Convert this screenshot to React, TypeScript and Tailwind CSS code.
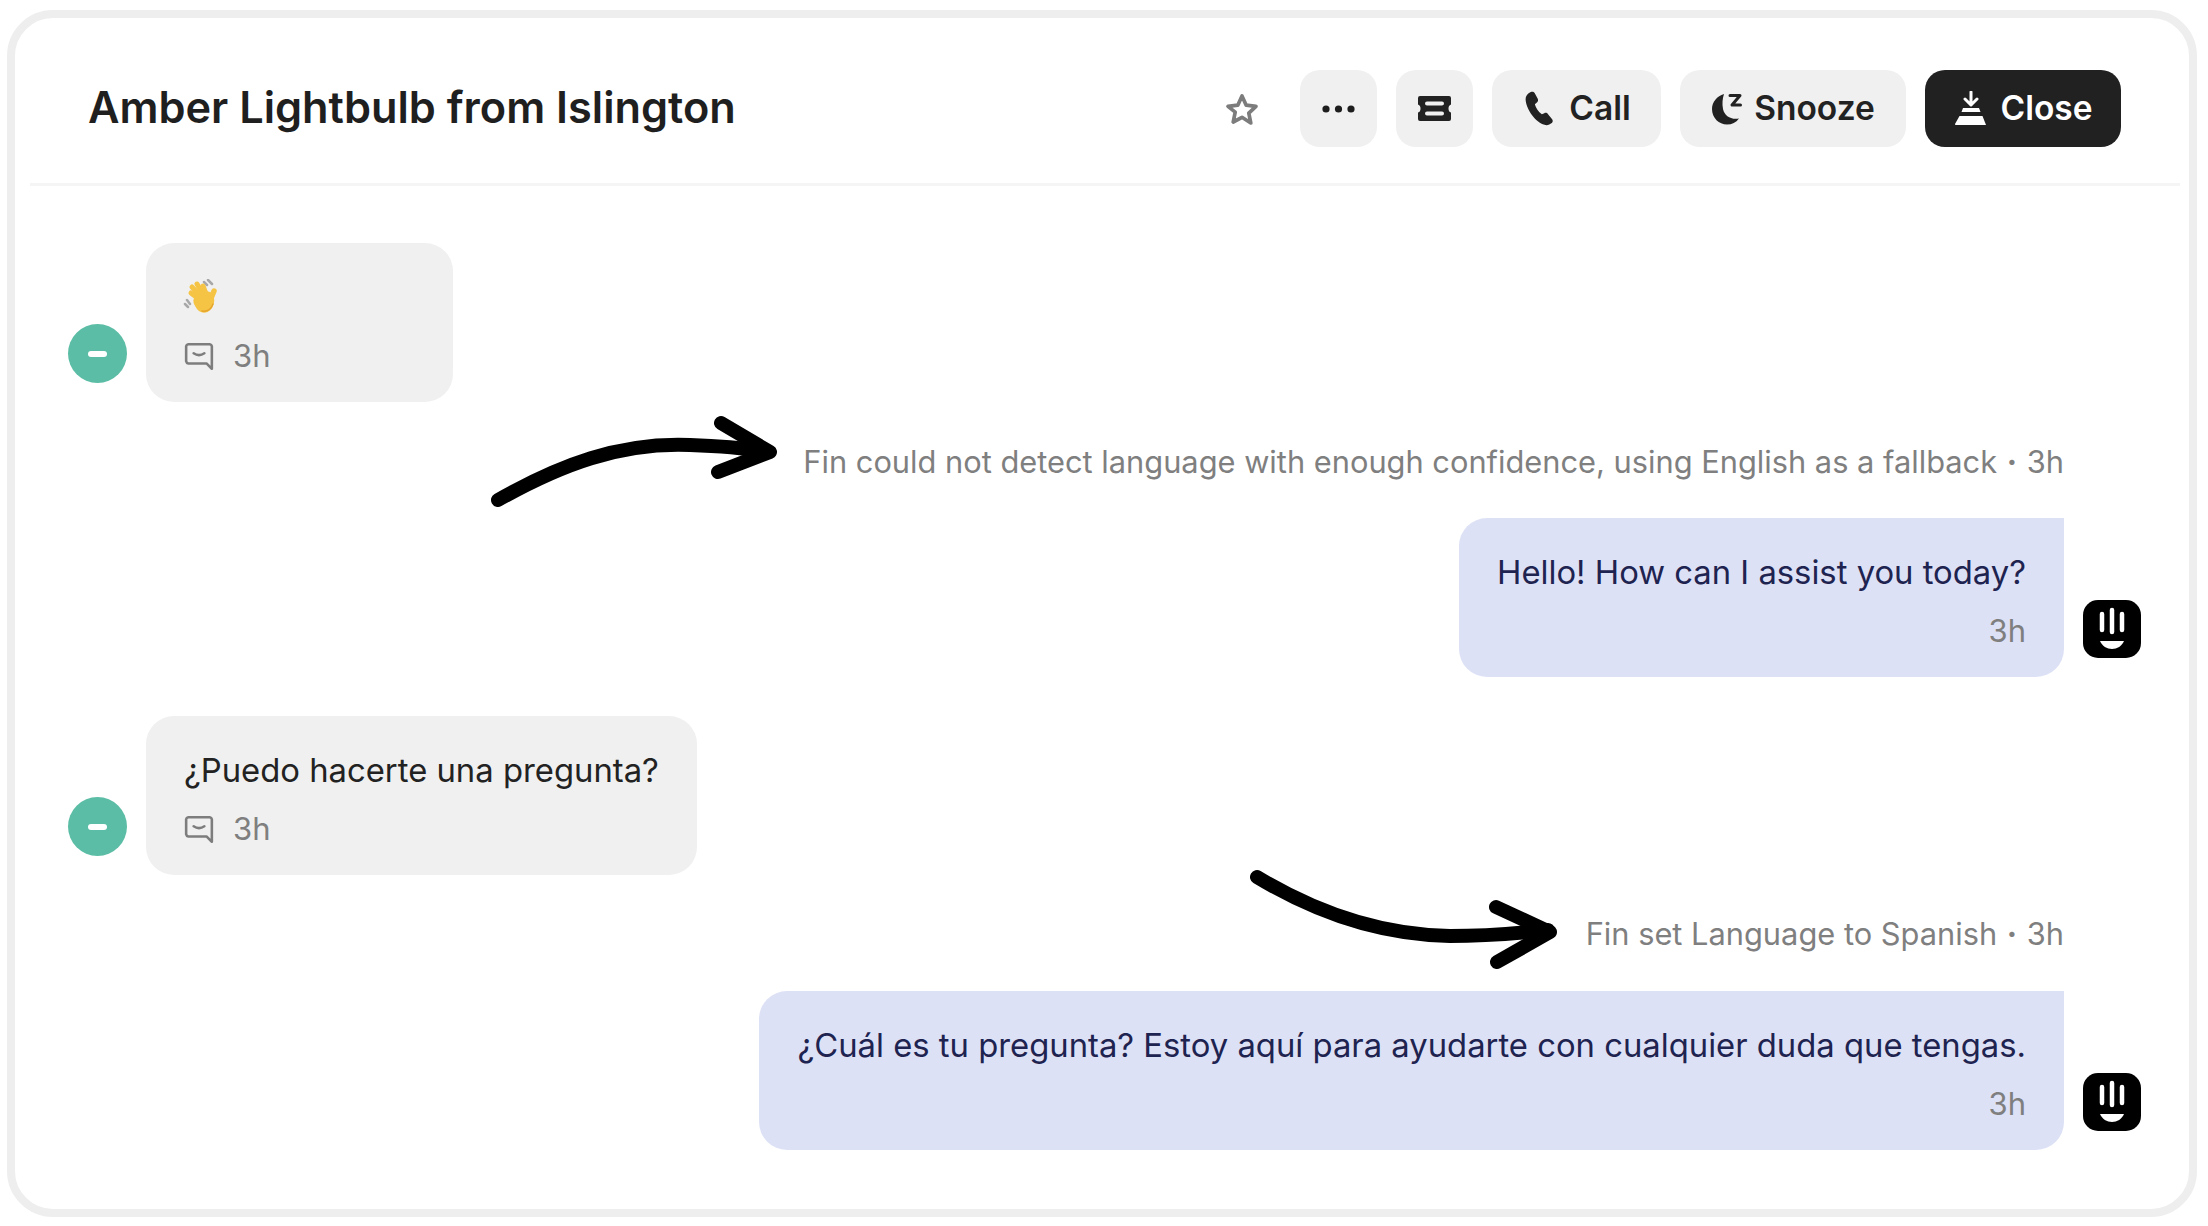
import React from "react";

function CommentIcon() {
  return (
    <svg width="30" height="29" viewBox="0 0 28 27" fill="none" stroke="#7d7d7d" strokeWidth="2.4" strokeLinejoin="round" strokeLinecap="round">
      <path d="M4 2h20a2.500 2.500 0 0 1 2 2v21l-5-5H4a2.500 2.500 0 0 1-2-2V4a2.500 2.500 0 0 1 2-2z" />
      <path d="M9 10.500c3 2 7 2 10 0" />
    </svg>
  );
}

function Hand() {
  return (
    <svg width="36" height="36" viewBox="0 0 36 36" fill="none" strokeLinecap="round">
      <path d="M2 25l3 3M4 21l3 4M21 3l3 3M25 1l4 4" stroke="#a8a8a8" strokeWidth="2.500" />
      <g stroke="#f6c445">
        <path d="M21 24L8 14" strokeWidth="5" />
        <path d="M22 22L9 8" strokeWidth="5" />
        <path d="M23 21L14 5" strokeWidth="5" />
        <path d="M25 20L20 7" strokeWidth="5" />
        <path d="M26 24L31 12" strokeWidth="5.500" />
      </g>
      <path d="M12 18c2-4 10-7 15-5 5 3 5 10 3 14-2 5-7 8-12 6-3-1-5-4-7-8-1-3-1-5 1-7z" fill="#f6c445" />
      <path d="M19 32c5 1 9-2 11-7" stroke="#e6a62f" strokeWidth="1.500" />
    </svg>
  );
}

function Bot() {
  return (
    <div className="w-[58px] h-[58px] rounded-[15px] bg-black mb-[19px] flex items-center justify-center shrink-0">
      <svg width="58" height="58" viewBox="0 0 58 58" fill="none" stroke="white" strokeLinecap="round">
        <path d="M19 14v16M29 10v22M39 14v16" strokeWidth="4.500" />
        <path d="M17 41h24c-2 5-7 8-12 8s-10-3-12-8z" fill="white" strokeWidth="0" />
      </svg>
    </div>
  );
}

function Presence() {
  return (
    <div className="w-[59px] h-[59px] rounded-full bg-[#5bbda5] mb-[19px] flex items-center justify-center shrink-0">
      <div className="w-[19px] h-[6px] rounded-full bg-white" />
    </div>
  );
}

function Time() {
  return (
    <div className="flex items-center gap-[19px] h-[38px]">
      <CommentIcon />
      <span className="text-[31px] leading-[38px] text-[#7f7f7f]">3h</span>
    </div>
  );
}

function UserMsg({ children, top }: { children: React.ReactNode; top: string }) {
  return (
    <div className={`flex items-end gap-[19px] pl-[53px] ${top}`}>
      <Presence />
      <div className="bg-[#f0f0f0] rounded-[28px] px-[38px] pt-[34px] h-[159px] min-w-[307px] flex flex-col justify-start gap-[20px]">
        {children}
      </div>
    </div>
  );
}

function BotMsg({ text, top }: { text: string; top: string }) {
  return (
    <div className={`flex items-end justify-end gap-[19px] pr-[48px] ${top}`}>
      <div className="bg-[#dde1f6] rounded-[28px] rounded-tr-none px-[38px] pt-[34px] h-[159px] flex flex-col items-end gap-[20px]">
        <span className="text-[32.8px] leading-[40px] text-[#1e2350] whitespace-nowrap">{text}</span>
        <span className="text-[31px] leading-[38px] text-[#7f7f7f]">3h</span>
      </div>
      <Bot />
    </div>
  );
}

function Status({ text, top }: { text: string; top: string }) {
  return (
    <div className={`flex justify-end pr-[125px] h-[40px] items-center ${top}`}>
      <span className="text-[30.8px] leading-[40px] text-[#7f7f7f] whitespace-nowrap">
        {text} <span className="font-bold mx-[1px]">·</span> 3h
      </span>
    </div>
  );
}

function IconBtn({ children }: { children: React.ReactNode }) {
  return <div className="w-[77px] h-[77px] rounded-[20px] bg-[#f0f0f0] flex items-center justify-center">{children}</div>;
}

function TextBtn({ icon, label, w, dark }: { icon: React.ReactNode; label: string; w: string; dark?: boolean }) {
  return (
    <div
      className={`${w} h-[77px] rounded-[20px] flex items-center justify-center gap-[11px] text-[33.5px] font-semibold ${
        dark ? "bg-[#212121] text-white" : "bg-[#f0f0f0] text-[#222222]"
      }`}
    >
      {icon}
      <span>{label}</span>
    </div>
  );
}

export default function App() {
  return (
    <div className="w-[2208px] h-[1226px] bg-white pt-[10px] pl-[7px] font-['Inter',sans-serif]">
      <div className="relative w-[2190px] h-[1207px] border-8 border-[#eeeeee] rounded-[46px] bg-white">
        <header className="ml-[15px] mr-[9px] h-[168px] border-b-[3px] border-[#f5f5f5] flex items-center pl-[59px] pr-[59px] pt-[16px]">
          <h1 className="text-[43.3px] font-semibold text-[#1f1f1f] whitespace-nowrap flex-1 -ml-[1px] -mt-[3px]">Amber Lightbulb from Islington</h1>
          <div className="flex items-center gap-[19px]">
            <svg width="36" height="34" viewBox="0 0 36 34" fill="none" stroke="#7c7c7c" strokeWidth="3.700" strokeLinejoin="round" className="mr-[21px]">
              <path d="M18 4l4.200 9.200 9.800 1.200-7.200 6.700 2 9.900L18 25.300 9.200 30l2-9.900L4 14.400l9.800-1.200z" />
            </svg>
            <IconBtn>
              <svg width="33" height="8" viewBox="0 0 33 8" fill="#1d1d1d">
                <circle cx="4" cy="4" r="3.600" />
                <circle cx="16.500" cy="4" r="3.600" />
                <circle cx="29" cy="4" r="3.600" />
              </svg>
            </IconBtn>
            <IconBtn>
              <svg width="35" height="25" viewBox="0 0 35 25">
                <path
                  fillRule="evenodd"
                  fill="#222222"
                  d="M3 0h29a2 2 0 0 1 2 2v6.500c-2 .5-2.500 2.500-2.500 4s.5 3.500 2.500 4V23a2 2 0 0 1-2 2H3a2 2 0 0 1-2-2v-6.500c2-.5 2.500-2.500 2.500-4s-.5-3.500-2.500-4V2a2 2 0 0 1 2-2zM10 5.500a1.200 1.200 0 0 0 0 4h15a1.200 1.200 0 0 0 0-4zM10 15.500a1.200 1.200 0 0 0 0 4h15a1.200 1.200 0 0 0 0-4z"
                />
              </svg>
            </IconBtn>
            <TextBtn
              w="w-[169px]"
              label="Call"
              icon={
                <svg width="36" height="35" viewBox="0 0 34 34" fill="#222222">
                  <path d="M8 1c1.500-.8 3-.3 3.800 1l3 5.500c.7 1.300.3 2.800-.8 3.700l-2 1.600c.9 3.500 3.500 7.500 6.800 9.700l2.400-1c1.300-.6 2.800-.2 3.600 1l4 5c.9 1.200.7 2.800-.4 3.700-2 1.700-4.500 2.500-7 1.700C13 30.500 3.500 18 3 8c-.1-3 2-5.600 5-7z" />
                </svg>
              }
            />
            <TextBtn
              w="w-[226px]"
              label="Snooze"
              icon={
                <svg width="32" height="33" viewBox="0 0 32 33" fill="#222222">
                  <path d="M13 2C6 4 1 10 1 17c0 9 7 15.500 15 15.500 5 0 9-2 12-6-8 1.500-14.500-2.500-16-9.500-1-5.500-.5-10.500 1-15z" />
                  <path d="M19 3.500h10L21 13h8.500" fill="none" stroke="#222222" strokeWidth="3" strokeLinejoin="round" strokeLinecap="round" />
                </svg>
              }
            />
            <TextBtn
              w="w-[196px]"
              label="Close"
              dark
              icon={
                <svg width="36" height="35" viewBox="0 0 36 35" fill="white">
                  <path d="M18 1v11M12 8l6 6 6-6" stroke="white" strokeWidth="3" fill="none" strokeLinecap="round" strokeLinejoin="round" />
                  <path d="M10 17h16l1.500 4h-19z" />
                  <path d="M6.500 25h23l3.500 9H2.500a1 1 0 0 1-.5-1z" />
                </svg>
              }
            />
          </div>
        </header>

        <UserMsg top="mt-[57px]">
          <div className="h-[40px] flex items-center -ml-[1px]">
            <Hand />
          </div>
          <Time />
        </UserMsg>

        <Status top="mt-[40px]" text="Fin could not detect language with enough confidence, using English as a fallback" />
        <BotMsg top="mt-[36px]" text="Hello! How can I assist you today?" />

        <UserMsg top="mt-[39px]">
          <span className="text-[32.8px] leading-[40px] text-[#222222] whitespace-nowrap">¿Puedo hacerte una pregunta?</span>
          <Time />
        </UserMsg>

        <Status top="mt-[39px]" text="Fin set Language to Spanish" />
        <BotMsg top="mt-[37px]" text="¿Cuál es tu pregunta? Estoy aquí para ayudarte con cualquier duda que tengas." />

        <svg className="absolute left-[455px] top-[392px]" width="320" height="100" viewBox="470 410 320 100" fill="none" stroke="black" strokeWidth="14" strokeLinecap="round" strokeLinejoin="round">
          <path d="M498 500C560 465 620 442 690 445C720 446 745 448 768 452" />
          <path d="M721 423L770 452L718 472" />
        </svg>
        <svg className="absolute left-[1215px] top-[842px]" width="340" height="110" viewBox="1230 860 340 110" fill="none" stroke="black" strokeWidth="14" strokeLinecap="round" strokeLinejoin="round">
          <path d="M1257 877C1320 915 1385 935 1450 936C1485 936 1520 933 1548 930" />
          <path d="M1496 907L1550 932L1497 962" />
        </svg>
      </div>
    </div>
  );
}
